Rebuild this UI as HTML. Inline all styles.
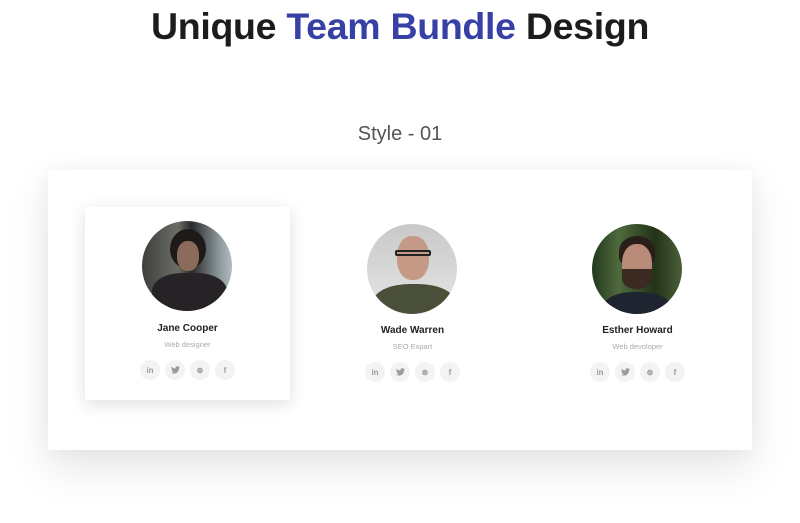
<!DOCTYPE html>
<html><head><meta charset="utf-8"><style>
*{margin:0;padding:0;box-sizing:border-box}
body{width:800px;height:523px;background:#fff;font-family:"Liberation Sans",sans-serif;position:relative;overflow:hidden}
h1{position:absolute;top:5px;left:0;width:800px;text-align:center;font-size:37.5px;font-weight:bold;color:#1c1c1e;letter-spacing:-0.3px}
h1 span{color:#3640a5}
.st{position:absolute;top:123px;left:0;width:800px;text-align:center;font-size:20px;color:#555}
.panel{position:absolute;left:48px;top:170px;width:704px;height:280px;background:#fff;box-shadow:0 18px 40px rgba(0,0,0,.1),0 0 20px rgba(0,0,0,.04)}
.card{position:absolute;width:205px;height:193px}
.card.sh{background:#fff;box-shadow:0 4px 16px rgba(0,0,0,.13)}
.av{position:absolute;left:57px;width:90px;height:90px;border-radius:50%;overflow:hidden}
.nm{position:absolute;left:0;width:205px;text-align:center;font-size:10px;font-weight:bold;color:#222}
.rl{position:absolute;left:0;width:205px;text-align:center;font-size:7.5px;color:#aaa}
.ic{position:absolute;left:0;width:205px;display:flex;justify-content:center;gap:5px}
.ic i{width:20px;height:20px;border-radius:50%;background:#f3f3f4;color:#9a9a9a;font-style:normal;font-size:8px;font-weight:bold;display:flex;align-items:center;justify-content:center}
</style></head><body>
<h1>Unique <span>Team Bundle</span> Design</h1>
<div class="st">Style - 01</div>
<div class="panel"></div>

<div class="card sh" style="left:85px;top:207px">
 <div class="av" style="top:14px;background:linear-gradient(90deg,#3d3f3b,#6c6d66 40%,#2a2a2c 55%,#8a9598 85%,#b0bcc0);">
  <div style="position:absolute;left:28px;top:8px;width:36px;height:40px;background:#1f1a1a;border-radius:50%"></div>
  <div style="position:absolute;left:35px;top:20px;width:22px;height:30px;background:#8a6a58;border-radius:45%"></div>
  <div style="position:absolute;left:10px;top:52px;width:75px;height:45px;background:#262226;border-radius:40% 40% 0 0"></div></div>
 <div class="nm" style="top:116px">Jane Cooper</div>
 <div class="rl" style="top:133px">Web designer</div>
 <div class="ic" style="top:153px"><i>in</i><i><svg width="9" height="8" viewBox="0 0 24 20"><path fill="#9a9a9a" d="M24 2.4c-.9.4-1.8.7-2.8.8 1-.6 1.8-1.6 2.2-2.7-1 .6-2 1-3.1 1.2C19.3.7 18 0 16.6 0c-2.7 0-4.9 2.2-4.9 4.9 0 .4 0 .8.1 1.1C7.7 5.8 4.1 3.9 1.7.9c-.4.7-.7 1.6-.7 2.5 0 1.7.9 3.2 2.2 4.1-.8 0-1.6-.2-2.2-.6v.1c0 2.4 1.7 4.4 3.9 4.8-.7.2-1.5.2-2.2.1.6 2 2.4 3.4 4.6 3.4-1.7 1.3-3.8 2.1-6.1 2.1H0c2.2 1.4 4.8 2.2 7.5 2.2 9.1 0 14-7.5 14-14v-.6c1-.7 1.8-1.6 2.5-2.6z"/></svg></i><i>⊛</i><i>f</i></div>
</div>

<div class="card" style="left:310px;top:209px">
 <div class="av" style="top:15px;background:linear-gradient(#c8c8c8,#e6e6e6)">
  <div style="position:absolute;left:30px;top:12px;width:32px;height:44px;background:#c49a86;border-radius:45%"></div>
  <div style="position:absolute;left:28px;top:26px;width:36px;height:6px;border:2px solid #222;border-radius:2px"></div>
  <div style="position:absolute;left:6px;top:60px;width:82px;height:40px;background:#4a4f3a;border-radius:45% 45% 0 0"></div></div>
 <div class="nm" style="top:116px">Wade Warren</div>
 <div class="rl" style="top:133px">SEO Expart</div>
 <div class="ic" style="top:153px"><i>in</i><i><svg width="9" height="8" viewBox="0 0 24 20"><path fill="#9a9a9a" d="M24 2.4c-.9.4-1.8.7-2.8.8 1-.6 1.8-1.6 2.2-2.7-1 .6-2 1-3.1 1.2C19.3.7 18 0 16.6 0c-2.7 0-4.9 2.200-4.9 4.9 0 .4 0 .8.1 1.1C7.7 5.8 4.1 3.9 1.7.9c-.4.7-.7 1.6-.7 2.5 0 1.7.9 3.2 2.2 4.1-.8 0-1.6-.2-2.2-.6v.1c0 2.4 1.7 4.4 3.9 4.8-.7.2-1.5.2-2.2.1.6 2 2.4 3.4 4.6 3.4-1.7 1.3-3.8 2.1-6.1 2.1H0c2.2 1.4 4.8 2.2 7.5 2.2 9.1 0 14-7.5 14-14v-.6c1-.7 1.8-1.6 2.5-2.6z"/></svg></i><i>⊛</i><i>f</i></div>
</div>

<div class="card" style="left:535px;top:209px">
 <div class="av" style="top:15px;background:linear-gradient(90deg,#22381f,#4f6a3c 30%,#223319 70%,#4a6039)">
  <div style="position:absolute;left:27px;top:12px;width:36px;height:30px;background:#2a1e18;border-radius:50% 50% 30% 30%"></div>
  <div style="position:absolute;left:30px;top:20px;width:30px;height:42px;background:#b88a78;border-radius:45%"></div>
  <div style="position:absolute;left:30px;top:45px;width:30px;height:20px;background:#3a2a22;border-radius:0 0 50% 50%"></div>
  <div style="position:absolute;left:12px;top:68px;width:66px;height:30px;background:#1e2530;border-radius:45% 45% 0 0"></div></div>
 <div class="nm" style="top:116px">Esther Howard</div>
 <div class="rl" style="top:133px">Web devoloper</div>
 <div class="ic" style="top:153px"><i>in</i><i><svg width="9" height="8" viewBox="0 0 24 20"><path fill="#9a9a9a" d="M24 2.4c-.9.4-1.8.7-2.8.8 1-.6 1.8-1.6 2.2-2.7-1 .6-2 1-3.1 1.2C19.3.7 18 0 16.6 0c-2.7 0-4.9 2.2-4.9 4.9 0 .4 0 .8.1 1.1C7.7 5.8 4.1 3.9 1.7.9c-.4.7-.7 1.6-.7 2.5 0 1.7.9 3.2 2.2 4.1-.8 0-1.6-.2-2.2-.6v.1c0 2.4 1.7 4.4 3.900 4.8-.7.2-1.5.2-2.2.1.6 2 2.4 3.4 4.6 3.4-1.7 1.3-3.8 2.1-6.1 2.1H0c2.2 1.4 4.8 2.2 7.5 2.2 9.1 0 14-7.5 14-14v-.6c1-.7 1.8-1.6 2.5-2.6z"/></svg></i><i>⊛</i><i>f</i></div>
</div>
</body></html>
